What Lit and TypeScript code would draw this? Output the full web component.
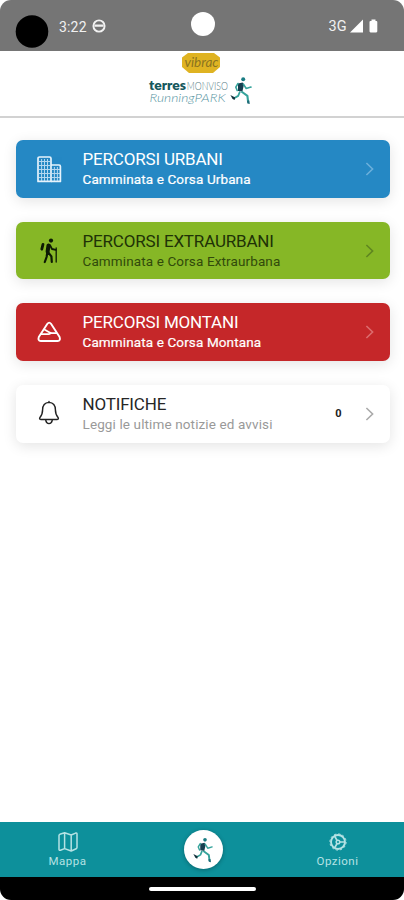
import { LitElement, html, css, svg } from "lit";
import { customElement, property } from "lit/decorators.js";

const runner = svg`
  <circle cx="13.2" cy="2.8" r="2" fill="#197c83"/>
  <path d="M8 7L12.6 6L14 8L12.4 15L8 14.4Z" fill="#173f50"/>
  <path d="M8 7L5.8 10.6L7.2 14M13.4 7.6L16.2 12L21 10.6" fill="none" stroke="#35a39b" stroke-width="1.6" stroke-linecap="round" stroke-linejoin="round"/>
  <path d="M11.4 15L17.4 19.4L18.2 26" fill="none" stroke="#35a39b" stroke-width="2.1" stroke-linejoin="round"/>
  <path d="M10 15L8.2 19.4L3.6 22" fill="none" stroke="#35a39b" stroke-width="1.8" stroke-linejoin="round"/>
  <path d="M.4 18.4L5.2 21L4.6 23.6L2.6 22.4Z" fill="#12323c"/>
  <path d="M17 24.2L19.2 23.8L19.8 27.4L17.4 27Z" fill="#1e6b78"/>`;

const icons: Record<string, unknown> = {
  buildings: svg`
    <g fill="none" stroke="#e6f3fc" stroke-width="1.7" stroke-linejoin="round">
      <path d="M2 25.4V2.6Q2 1 3.6 1H13.4Q15 1 15 2.6V25.4Z"/>
      <path d="M15 9H23Q24.4 9 24.4 10.4V25.4H15"/>
    </g>
    <path d="M5.6 3V25M8.5 3V25M11.5 3V25M3 5.5H14M3 9.5H14M3 13.5H14M3 17.5H14M3 21.5H14M18.4 11V25M21.4 11V25M16 13.5H24M16 17.5H24M16 21.5H24" stroke="#cfe6f7" stroke-width="1" opacity=".85"/>`,
  hiker: svg`
    <g fill="none" stroke="#0d1a04" stroke-linecap="round" stroke-linejoin="round">
      <circle cx="15" cy="3.6" r="2.1" fill="#0d1a04" stroke="none"/>
      <path d="M12.5 8.4L11.6 14.6" stroke-width="4"/>
      <path d="M11.2 16L10.6 20L8.8 25M12.4 15.6L15.4 19.4L15.8 25" stroke-width="2.2"/>
      <path d="M14 8.2L16 12L19.8 12.8" stroke-width="1.8"/>
      <path d="M20.2 11V25" stroke-width="1.3"/>
      <path d="M7 7.4L5.8 12.2" stroke-width="2.8"/>
    </g>`,
  mountain: svg`
    <g fill="none" stroke="#fff" stroke-width="1.9" stroke-linejoin="round" stroke-linecap="round">
      <path d="M11.4 4.8Q13.2 2.4 15 4.8L23.6 18Q24.8 21.8 21.6 22H4.8Q1.6 21.8 2.8 18Z"/>
      <path d="M8.4 10.6L13.6 13.6Q14.6 14.2 16 14.2H20.2M5.6 15.2H12.4Q13.6 15.2 14.6 14.4" stroke-width="1.7"/>
    </g>`,
  bell: svg`
    <g fill="none" stroke="#222" stroke-width="1.45" stroke-linejoin="round" stroke-linecap="round">
      <path d="M13 2.2V1.4M13 2.4C8.4 2.8 6.6 6.4 6.6 9.8C6.6 14.6 5.6 15.8 3.8 17.8Q3.2 19.2 4.6 19.4H21.4Q22.8 19.2 22.2 17.8C20.4 15.8 19.4 14.6 19.4 9.8C19.4 6.4 17.6 2.8 13 2.4Z"/>
      <path d="M9.8 19.6V20.4Q10.4 23.6 13 23.6Q15.6 23.6 16.2 20.4V19.6"/>
    </g>`,
};

@customElement("route-card")
class RouteCard extends LitElement {
  @property() icon = "";
  @property() heading = "";
  @property() text = "";
  @property() count = "";
  static styles = css`
    :host { display: flex; align-items: center; box-sizing: border-box; height: 57.6px; border-radius: 7px;
      padding: 0 13.5px 0 20px; box-shadow: 0 3px 14px rgba(0,0,0,.11); font-family: Roboto, sans-serif;
      background: #2588c4; color: #fff; --sub: #fff; --arrow: #6bafdb; }
    :host([tone="green"]) { background: #86b726; color: #203206; --sub: #314a0b; --arrow: #5f8620; }
    :host([tone="red"]) { background: #c52729; --arrow: #dc6c6e; }
    :host([tone="white"]) { background: #fff; color: #262626; --sub: #999; --arrow: #aaa; }
    .icon { width: 26px; height: 27px; flex: none; margin-right: 20.5px; }
    .body { flex: 1; white-space: nowrap; }
    .heading { font-size: 17px; line-height: 20px; letter-spacing: -.18px; }
    .sub { font-size: 13.5px; line-height: 20px; color: var(--sub); letter-spacing: .12px; padding-top: .3px; }
    :host([tone="blue"]) .sub, :host([tone="red"]) .sub { -webkit-text-stroke: .2px; }
    .count { font-size: 11px; font-weight: 700; color: #222; margin-right: 21.5px; }
    .arrow { width: 13px; height: 16px; flex: none; fill: none; stroke: var(--arrow); stroke-width: 1.6; }
  `;
  render() {
    return html`
      <svg class="icon" viewBox="0 0 26 27">${icons[this.icon]}</svg>
      <div class="body"><div class="heading">${this.heading}</div><div class="sub">${this.text}</div></div>
      ${this.count ? html`<span class="count">${this.count}</span>` : ""}
      <svg class="arrow" viewBox="0 0 13 16"><path d="M3.4 2L9.6 8L3.4 14"/></svg>`;
  }
}

@customElement("app-root")
class AppRoot extends LitElement {
  static styles = css`
    :host { display: block; width: 404px; height: 900px; background: #fff; font-family: Roboto, sans-serif; }
    .screen { display: flex; flex-direction: column; height: 900px; border-radius: 11px; overflow: hidden; }
    .status { height: 51px; background: #757575; flex: none; }
    .status svg { display: block; width: 404px; height: 51px; }
    .header { height: 65px; flex: none; border-bottom: 2px solid #d2d2d2; display: flex; justify-content: center; }
    .header svg { width: 140px; height: 65px; }
    .list { flex: 1; display: flex; flex-direction: column; gap: 24px; padding: 22.3px 14.5px 0 16px; }
    .tabs { height: 55.5px; flex: none; background: #0d909b; display: grid; grid-template-columns: 135px 1fr 133px; }
    .tab { display: flex; flex-direction: column; align-items: center; padding-top: 9.5px; color: #b5e2e4; font-size: 11.5px; line-height: 16px; letter-spacing: .5px; }
    .tab svg { width: 22px; height: 22px; fill: none; stroke: #b5e2e4; stroke-width: 1.5; stroke-linejoin: round; }
    .home { width: 39px; height: 39px; margin: 8.5px auto 0; border-radius: 50%; background: #fff; display: flex;
      align-items: center; justify-content: center; box-shadow: 0 1px 4px rgba(0,0,0,.3); }
    .home svg { width: 20px; height: 26px; }
    .gesture { height: 22.7px; flex: none; background: #000; display: flex; justify-content: center; align-items: center; }
    .pill { width: 107px; height: 4px; border-radius: 2px; background: #fff; }
  `;
  render() {
    return html`<div class="screen">
      <div class="status"><svg viewBox="0 0 404 51" font-family="Roboto, sans-serif" fill="#f1f1f1">
        <circle cx="32" cy="31.5" r="16.3" fill="#000"/>
        <text x="59" y="31.5" font-size="14" textLength="27.5">3:22</text>
        <circle cx="99" cy="26" r="5.6" fill="none" stroke="#f1f1f1" stroke-width="1.9"/>
        <path d="M94.500 25.600H103.500" stroke="#f1f1f1" stroke-width="2.2"/>
        <circle cx="203" cy="24" r="12" fill="#fff"/>
        <text x="328.500" y="31" font-size="14" textLength="18" lengthAdjust="spacingAndGlyphs">3G</text>
        <path d="M350 32.5L363 19.5V32.5Z" fill="#fff"/>
        <path d="M369.5 22Q369.5 21 370.5 21H371.5V19.6H375.5V21H376.3Q377.3 21 377.3 22V31.3Q377.3 32.4 376.2 32.4H370.6Q369.5 32.4 369.5 31.3Z" fill="#fff"/>
      </svg></div>
      <div class="header"><svg viewBox="132 51 140 65" font-family="Lato, sans-serif">
        <path d="M188 53H214L220 57.500V67L213 73H189L182 67V57.500Z" fill="#dfb322"/>
        <text x="184.5" y="66.5" font-size="12.5" font-style="italic" fill="#8b7320" textLength="34" lengthAdjust="spacingAndGlyphs">vibrac</text>
        <text x="149" y="90" font-size="12.2" font-weight="800" fill="#16575d" textLength="37" lengthAdjust="spacingAndGlyphs">terres</text>
        <text x="186.800" y="90" font-size="11" font-weight="300" fill="#527d82" textLength="41" lengthAdjust="spacingAndGlyphs">MONVISO</text>
        <text x="149.500" y="101.500" font-size="11.8" font-style="italic" font-weight="300" fill="#5895a2" textLength="76" lengthAdjust="spacingAndGlyphs">RunningPARK</text>
        <g transform="translate(230 76.500)">${runner}</g>
      </svg></div>
      <div class="list">
        <route-card tone="blue" icon="buildings" heading="PERCORSI URBANI" text="Camminata e Corsa Urbana"></route-card>
        <route-card tone="green" icon="hiker" heading="PERCORSI EXTRAURBANI" text="Camminata e Corsa Extraurbana"></route-card>
        <route-card tone="red" icon="mountain" heading="PERCORSI MONTANI" text="Camminata e Corsa Montana"></route-card>
        <route-card tone="white" icon="bell" heading="NOTIFICHE" text="Leggi le ultime notizie ed avvisi" count="0"></route-card>
      </div>
      <div class="tabs">
        <div class="tab"><svg viewBox="0 0 22 22"><path d="M2 4.5Q2 3.7 2.8 3.3L7.6 1.8L14.2 4L18.6 2.1Q20 1.8 20 3V16.6Q20 17.4 19.2 17.8L14.2 20L7.6 17.6L3.4 19.3Q2 19.6 2 18.4ZM7.6 1.8V17.6M14.2 4V20"/></svg>Mappa</div>
        <div class="home"><svg viewBox="0 0 22 28">${runner}</svg></div>
        <div class="tab"><svg viewBox="0 0 22 22"><circle cx="11" cy="11" r="7" stroke-width="1.9"/><circle cx="11" cy="11" r="8.100" stroke-width="1" stroke-dasharray="2.240 2"/><path d="M11 11H18M11 11L7.500 5M11 11L7.500 17" stroke-width="1.6"/><circle cx="11" cy="11" r="1.800" fill="#0d909b"/></svg>Opzioni</div>
      </div>
      <div class="gesture"><div class="pill"></div></div>
    </div>`;
  }
}
